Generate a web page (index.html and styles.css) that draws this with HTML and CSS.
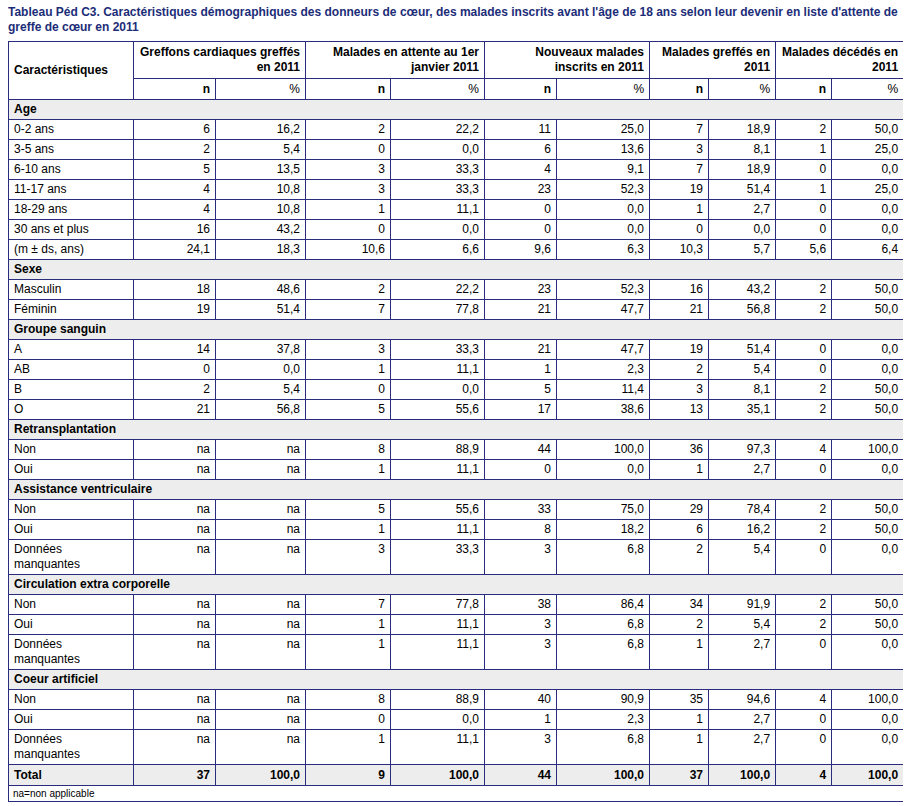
FILE: index.html
```html
<!DOCTYPE html>
<html lang="fr">
<head>
<meta charset="utf-8">
<title>Tableau Péd C3</title>
<link rel="stylesheet" href="styles.css">
</head>
<body>
<h1 class="title">Tableau Péd C3. Caractéristiques démographiques des donneurs de cœur, des malades inscrits avant l'âge de 18 ans selon leur devenir en liste d'attente de greffe de cœur en 2011</h1>
<table class="data">
<colgroup>
<col class="c0"><col class="c1"><col class="c2"><col class="c3"><col class="c4"><col class="c5"><col class="c6"><col class="c7"><col class="c8"><col class="c9"><col class="c10">
</colgroup>
<thead>
<tr class="h1">
<th rowspan="2" class="lab">Caractéristiques</th>
<th colspan="2">Greffons cardiaques greffés en 2011</th>
<th colspan="2">Malades en attente au 1er janvier 2011</th>
<th colspan="2">Nouveaux malades inscrits en 2011</th>
<th colspan="2">Malades greffés en 2011</th>
<th colspan="2">Malades décédés en 2011</th>
</tr>
<tr class="h2">
<th>n</th><th class="pct">%</th><th>n</th><th class="pct">%</th><th>n</th><th class="pct">%</th><th>n</th><th class="pct">%</th><th>n</th><th class="pct">%</th>
</tr>
</thead>
<tbody>
<tr class="sec"><td colspan="11">Age</td></tr>
<tr><td>0-2 ans</td><td>6</td><td>16,2</td><td>2</td><td>22,2</td><td>11</td><td>25,0</td><td>7</td><td>18,9</td><td>2</td><td>50,0</td></tr>
<tr><td>3-5 ans</td><td>2</td><td>5,4</td><td>0</td><td>0,0</td><td>6</td><td>13,6</td><td>3</td><td>8,1</td><td>1</td><td>25,0</td></tr>
<tr><td>6-10 ans</td><td>5</td><td>13,5</td><td>3</td><td>33,3</td><td>4</td><td>9,1</td><td>7</td><td>18,9</td><td>0</td><td>0,0</td></tr>
<tr><td>11-17 ans</td><td>4</td><td>10,8</td><td>3</td><td>33,3</td><td>23</td><td>52,3</td><td>19</td><td>51,4</td><td>1</td><td>25,0</td></tr>
<tr><td>18-29 ans</td><td>4</td><td>10,8</td><td>1</td><td>11,1</td><td>0</td><td>0,0</td><td>1</td><td>2,7</td><td>0</td><td>0,0</td></tr>
<tr><td>30 ans et plus</td><td>16</td><td>43,2</td><td>0</td><td>0,0</td><td>0</td><td>0,0</td><td>0</td><td>0,0</td><td>0</td><td>0,0</td></tr>
<tr><td>(m ± ds, ans)</td><td>24,1</td><td>18,3</td><td>10,6</td><td>6,6</td><td>9,6</td><td>6,3</td><td>10,3</td><td>5,7</td><td>5,6</td><td>6,4</td></tr>
<tr class="sec"><td colspan="11">Sexe</td></tr>
<tr><td>Masculin</td><td>18</td><td>48,6</td><td>2</td><td>22,2</td><td>23</td><td>52,3</td><td>16</td><td>43,2</td><td>2</td><td>50,0</td></tr>
<tr><td>Féminin</td><td>19</td><td>51,4</td><td>7</td><td>77,8</td><td>21</td><td>47,7</td><td>21</td><td>56,8</td><td>2</td><td>50,0</td></tr>
<tr class="sec"><td colspan="11">Groupe sanguin</td></tr>
<tr><td>A</td><td>14</td><td>37,8</td><td>3</td><td>33,3</td><td>21</td><td>47,7</td><td>19</td><td>51,4</td><td>0</td><td>0,0</td></tr>
<tr><td>AB</td><td>0</td><td>0,0</td><td>1</td><td>11,1</td><td>1</td><td>2,3</td><td>2</td><td>5,4</td><td>0</td><td>0,0</td></tr>
<tr><td>B</td><td>2</td><td>5,4</td><td>0</td><td>0,0</td><td>5</td><td>11,4</td><td>3</td><td>8,1</td><td>2</td><td>50,0</td></tr>
<tr><td>O</td><td>21</td><td>56,8</td><td>5</td><td>55,6</td><td>17</td><td>38,6</td><td>13</td><td>35,1</td><td>2</td><td>50,0</td></tr>
<tr class="sec"><td colspan="11">Retransplantation</td></tr>
<tr><td>Non</td><td>na</td><td>na</td><td>8</td><td>88,9</td><td>44</td><td>100,0</td><td>36</td><td>97,3</td><td>4</td><td>100,0</td></tr>
<tr><td>Oui</td><td>na</td><td>na</td><td>1</td><td>11,1</td><td>0</td><td>0,0</td><td>1</td><td>2,7</td><td>0</td><td>0,0</td></tr>
<tr class="sec"><td colspan="11">Assistance ventriculaire</td></tr>
<tr><td>Non</td><td>na</td><td>na</td><td>5</td><td>55,6</td><td>33</td><td>75,0</td><td>29</td><td>78,4</td><td>2</td><td>50,0</td></tr>
<tr><td>Oui</td><td>na</td><td>na</td><td>1</td><td>11,1</td><td>8</td><td>18,2</td><td>6</td><td>16,2</td><td>2</td><td>50,0</td></tr>
<tr><td>Données<br>manquantes</td><td>na</td><td>na</td><td>3</td><td>33,3</td><td>3</td><td>6,8</td><td>2</td><td>5,4</td><td>0</td><td>0,0</td></tr>
<tr class="sec"><td colspan="11">Circulation extra corporelle</td></tr>
<tr><td>Non</td><td>na</td><td>na</td><td>7</td><td>77,8</td><td>38</td><td>86,4</td><td>34</td><td>91,9</td><td>2</td><td>50,0</td></tr>
<tr><td>Oui</td><td>na</td><td>na</td><td>1</td><td>11,1</td><td>3</td><td>6,8</td><td>2</td><td>5,4</td><td>2</td><td>50,0</td></tr>
<tr><td>Données<br>manquantes</td><td>na</td><td>na</td><td>1</td><td>11,1</td><td>3</td><td>6,8</td><td>1</td><td>2,7</td><td>0</td><td>0,0</td></tr>
<tr class="sec"><td colspan="11">Coeur artificiel</td></tr>
<tr><td>Non</td><td>na</td><td>na</td><td>8</td><td>88,9</td><td>40</td><td>90,9</td><td>35</td><td>94,6</td><td>4</td><td>100,0</td></tr>
<tr><td>Oui</td><td>na</td><td>na</td><td>0</td><td>0,0</td><td>1</td><td>2,3</td><td>1</td><td>2,7</td><td>0</td><td>0,0</td></tr>
<tr><td>Données<br>manquantes</td><td>na</td><td>na</td><td>1</td><td>11,1</td><td>3</td><td>6,8</td><td>1</td><td>2,7</td><td>0</td><td>0,0</td></tr>
<tr class="total"><td>Total</td><td>37</td><td>100,0</td><td>9</td><td>100,0</td><td>44</td><td>100,0</td><td>37</td><td>100,0</td><td>4</td><td>100,0</td></tr>
<tr class="note"><td colspan="11">na=non applicable</td></tr>
</tbody>
</table>
</body>
</html>
```
FILE: styles.css
```css
body {
  margin: 5px 8px 8px 8px;
  font-family: "Liberation Sans", Arial, sans-serif;
  font-size: 12px;
  color: #000;
  background: #fff;
}
.title {
  margin: 0 0 6px 0;
  font-size: 12px;
  line-height: 15px;
  font-weight: bold;
  color: #1c2d78;
}
.data {
  border-collapse: collapse;
  table-layout: fixed;
  width: 895px;
  border: 1px solid #2a2c7e;
}
.c0 { width: 125px; }
.c1 { width: 82px; }
.c2 { width: 90px; }
.c3 { width: 85px; }
.c4 { width: 94px; }
.c5 { width: 72px; }
.c6 { width: 93px; }
.c7 { width: 59px; }
.c8 { width: 67px; }
.c9 { width: 56px; }
.c10 { width: 72px; }
.data th,
.data td {
  border: 1px solid #2a2c7e;
  padding: 2px 5px 2px 5px;
  line-height: 15px;
  text-align: right;
  vertical-align: top;
}
.data .h1 th {
  padding-top: 3px;
  padding-bottom: 3px;
}
.data .h2 th {
  padding-top: 3px;
}
.data td:first-child,
.data th.lab {
  text-align: left;
}
.data th {
  font-weight: bold;
}
.data th.lab {
  vertical-align: middle;
}
.data th.pct {
  font-weight: normal;
}
.sec td {
  background: #ededed;
  font-weight: bold;
  text-align: left;
}
.total td {
  background: #ededed;
  font-weight: bold;
  padding-top: 3px;
}
.note td {
  font-size: 10px;
  line-height: 13px;
  text-align: left;
  padding: 1px 4px 1px 4px;
}
```
